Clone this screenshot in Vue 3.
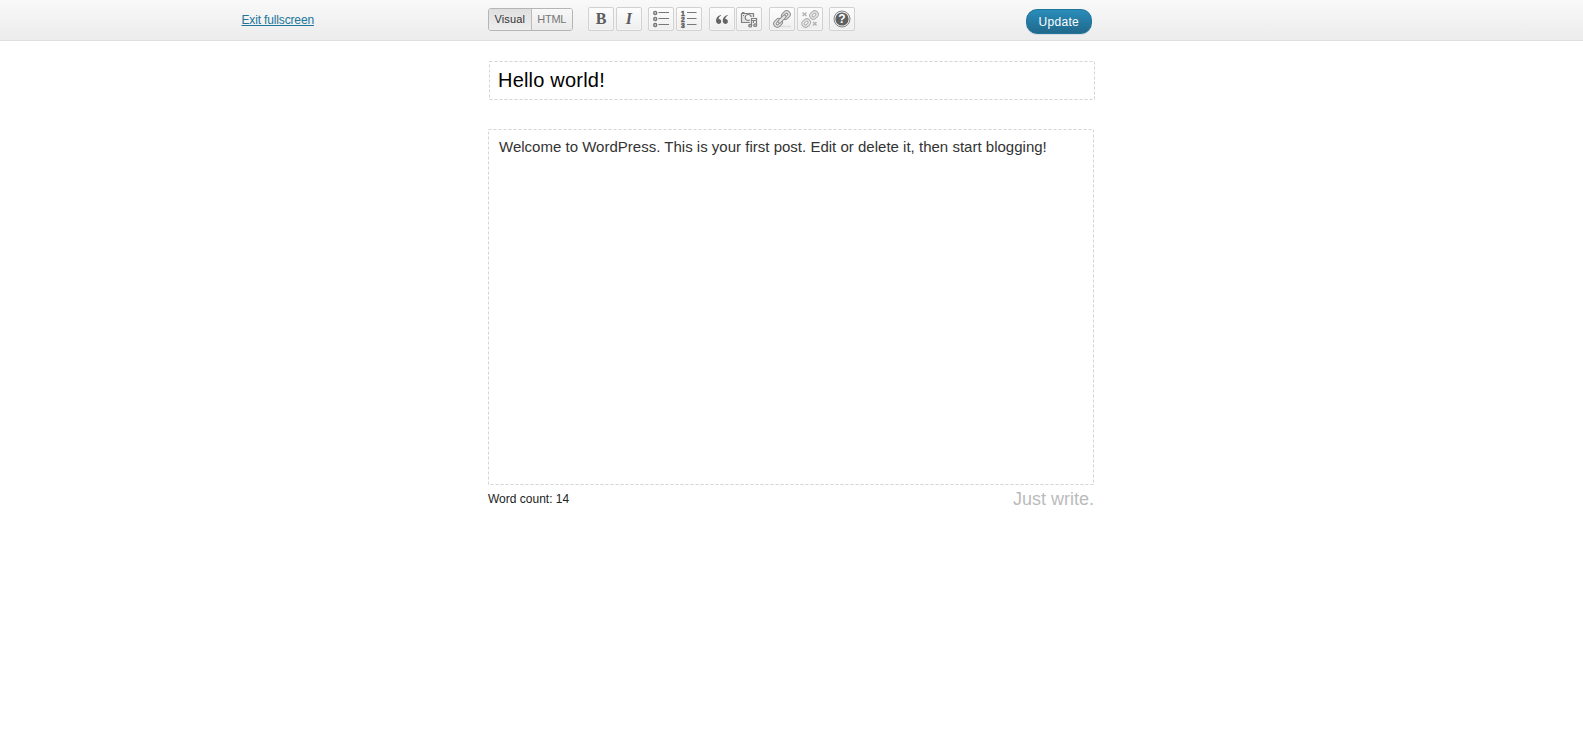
<script setup>
import { ref } from 'vue'
const title = ref('Hello world!')
const body = ref('Welcome to WordPress. This is your first post. Edit or delete it, then start blogging!')
</script>

<template>
  <div class="screen">
    <header class="toolbar">
      <div class="side"><a class="exit">Exit fullscreen</a></div>
      <div class="modes">
        <span class="mode active"><span>Visual</span></span>
        <span class="mode html"><span>HTML</span></span>
      </div>
      <div class="buttons">
        <button class="btn"><b class="glyph">B</b></button>
        <button class="btn"><b class="glyph italic">I</b></button>
        <button class="btn gap">
          <svg width="20" height="20" viewBox="0 0 20 20" fill="none" stroke="#777">
            <g stroke-width="1.400"><circle cx="4.200" cy="4" r="1.500" /><circle cx="4.200" cy="10" r="1.500" /><circle cx="4.200" cy="16" r="1.500" /></g>
            <path d="M7.500 3.500H18M7.500 9.500H18M7.500 15.500H18" stroke-width="1.200" />
          </svg>
        </button>
        <button class="btn gap2">
          <svg width="20" height="20" viewBox="0 0 20 20" fill="none" stroke="#777">
            <path d="M8 3.500H17.500M8 9.500H17.500M8 15.500H17.500" stroke-width="1.200" />
            <g class="nums"><text x="2" y="6.500">1</text><text x="2" y="12.500">2</text><text x="2" y="18.500">3</text></g>
          </svg>
        </button>
        <button class="btn gap">
          <svg width="20" height="20" viewBox="0 0 20 20" fill="#646464">
            <path d="M9 6C5.900 6.600 4 8.900 4 11.600C4 13.600 5 14.900 6.600 14.900C8.100 14.900 9.200 13.900 9.200 12.400C9.200 11 8.200 10 6.900 10H6.500C6.700 8.500 7.600 7.400 9 6.700ZM15.700 6C12.600 6.600 10.700 8.900 10.700 11.600C10.700 13.600 11.700 14.900 13.300 14.900C14.800 14.900 15.900 13.900 15.900 12.400C15.900 11 14.900 10 13.600 10H13.200C13.400 8.500 14.300 7.400 15.700 6.700Z" />
          </svg>
        </button>
        <button class="btn">
          <svg width="20" height="20" viewBox="0 0 20 20" fill="none" stroke="#808080" stroke-width="1.200">
            <path d="M2.500 4.500H14.500V13.500H2.500Z" fill="#e4e4e4" />
            <path d="M3 3.500H5.500M4 6.500H5" />
            <circle cx="9.200" cy="8.500" r="3" fill="#f6f6f6" />
            <path d="M12.300 16V9.500H17V16" stroke="#f0f0f0" stroke-width="3" />
            <path d="M12.500 16.500V9.500H17.500V16M12.500 11.500H17.500" />
            <ellipse cx="11.200" cy="16.700" rx="1.500" ry="1.300" fill="#ccc" /><ellipse cx="16.200" cy="16.200" rx="1.500" ry="1.300" fill="#ccc" />
          </svg>
        </button>
        <button class="btn gap">
          <svg width="20" height="20" viewBox="0 0 20 20" fill="none">
            <path d="M8 17.500H19" stroke="#ddd" stroke-width="1.500" />
            <g transform="rotate(-45 10 10)" stroke="#8f8f8f">
              <rect x="-.2" y="6.400" width="9.400" height="7.200" rx="3.600" fill="#e2e2e2" /><rect x="10.800" y="6.400" width="9.400" height="7.200" rx="3.600" fill="#e2e2e2" />
              <rect x="2.300" y="8.800" width="4.700" height="2.400" rx="1.200" fill="#f5f5f5" /><rect x="13" y="8.800" width="4.700" height="2.400" rx="1.200" fill="#f5f5f5" />
              <rect x="5" y="8.500" width="10" height="3" rx="1.500" fill="#e9e9e9" />
            </g>
          </svg>
        </button>
        <button class="btn">
          <svg width="20" height="20" viewBox="0 0 20 20" fill="none">
            <path d="M4 17.800H12" stroke="#e0e0e0" />
            <g stroke="#adadad" fill="#e9e9e9">
              <g transform="rotate(-40 14 6)"><rect x="9.500" y="2.500" width="9" height="7" rx="3.500" /><rect x="11.800" y="4.800" width="4.400" height="2.400" rx="1.200" fill="#f8f8f8" /></g>
              <g transform="rotate(-40 6.200 14)"><rect x="1.700" y="10.500" width="9" height="7" rx="3.500" /><rect x="4" y="12.800" width="4.400" height="2.400" rx="1.200" fill="#f8f8f8" /></g>
            </g>
            <path d="M2.500 3.500L6.500 7M6.500 3.500L2.500 7M13 13L16.500 16.500M16.500 13L13 16.500" stroke="#b4b4b4" stroke-width="1.500" />
          </svg>
        </button>
        <button class="btn gap">
          <svg width="20" height="20" viewBox="0 0 20 20">
            <circle cx="10" cy="10" r="8" fill="#eee" stroke="#858585" />
            <circle cx="10" cy="10" r="6.600" fill="#606060" />
            <text class="question" x="10" y="14.200" text-anchor="middle">?</text>
          </svg>
        </button>
      </div>
      <button class="update"><span>Update</span></button>
    </header>
    <main>
      <div class="title"><svg class="frame" width="606" height="40" fill="none"><rect x=".5" y=".5" width="605" height="38" /></svg><span>{{ title }}</span></div>
      <div class="content"><svg class="frame" width="606" height="356" fill="none"><rect x=".5" y=".5" width="605" height="355" /></svg><span>{{ body }}</span></div>
      <footer><span class="count">Word count: 14</span><span class="tagline">Just write.</span></footer>
    </main>
  </div>
</template>

<style>
body { margin: 0; background: #fff; }
</style>

<style scoped>
.screen { height: 736px; overflow: hidden; font-family: "Liberation Sans", Arial, sans-serif; }
.toolbar { height: 41px; box-sizing: border-box; display: flex; align-items: flex-start; background: linear-gradient(#f9f9f9, #ececec); border-bottom: 1px solid #dfdfdf; }
.side { width: 246.5px; padding-left: 241.5px; flex-shrink: 0; }
.exit { display: inline-block; margin-top: 13px; font-size: 12px; line-height: 14px; letter-spacing: -.15px; color: #21759b; text-decoration: underline; }
.modes { display: flex; height: 23px; margin-top: 8px; width: 85px; box-sizing: border-box; border: 1px solid #b5b5b5; border-radius: 3px; overflow: hidden; font-size: 11px; line-height: 21px; }
.mode { text-align: center; color: #777; }
.active { width: 43px; box-sizing: border-box; color: #333; border-right: 1px solid #bbb; background: linear-gradient(#dfdfdf, #eee); }
.active span { letter-spacing: .15px; }
.html { width: 41px; background: linear-gradient(#f8f8f8, #e9e9e9); }
.html span { letter-spacing: -.25px; }
.buttons { display: flex; margin: 7px 0 0 15px; width: 267px; }
.btn { width: 26px; height: 24px; flex-shrink: 0; box-sizing: border-box; padding: 0; margin: 0 1.800px 0 0; border: 1px solid #d1d1d1; border-radius: 2px; background: linear-gradient(#fdfdfd, #eee); display: flex; align-items: center; justify-content: center; box-shadow: inset 0 0 0 1px #fafafa88; }
.gap { margin-left: 4.700px; }
.glyph { font: bold 16px/20px "Liberation Serif", "Times New Roman", serif; color: #5c5c5c; }
.italic { font-style: italic; }
.nums { font: bold 6.800px "Liberation Sans", sans-serif; fill: #555; stroke: #666; stroke-width: .5px; }
.question { font: bold 12px "Liberation Sans", sans-serif; fill: #fff; }
.update { width: 65.5px; height: 25px; margin: 9px 0 0 171px; padding: 0; border: 1px solid #21759b; border-radius: 11px; background: linear-gradient(#298cba, #21698c); color: #fff; font: 12px/22px "Liberation Sans", Arial, sans-serif; box-shadow: 0 1px 0 #d4dce0; }
.update span { letter-spacing: .3px; }
main { width: 608px; margin-left: 488px; }
.title { position: relative; width: 606px; height: 39px; margin: 20px 0 0 1px; box-sizing: border-box; padding: 7px 0 0 9px; font-size: 20px; line-height: 24px; letter-spacing: .2px; color: #000; }
.frame { position: absolute; left: 0; top: 0; }
.frame rect { stroke: #d4d4d4; stroke-dasharray: 3 2; }
.content { position: relative; width: 606px; height: 356px; margin-top: 29px; box-sizing: border-box; padding: 9px 0 0 11px; font-size: 15px; line-height: 18px; color: #333; }
.content span { letter-spacing: .01px; }
footer { width: 606px; display: flex; justify-content: space-between; }
.count { font-size: 12px; line-height: 14px; margin-top: 7px; color: #222; }
.tagline { font-size: 18px; line-height: 22px; margin-top: 3px; color: #bbb; }
</style>
